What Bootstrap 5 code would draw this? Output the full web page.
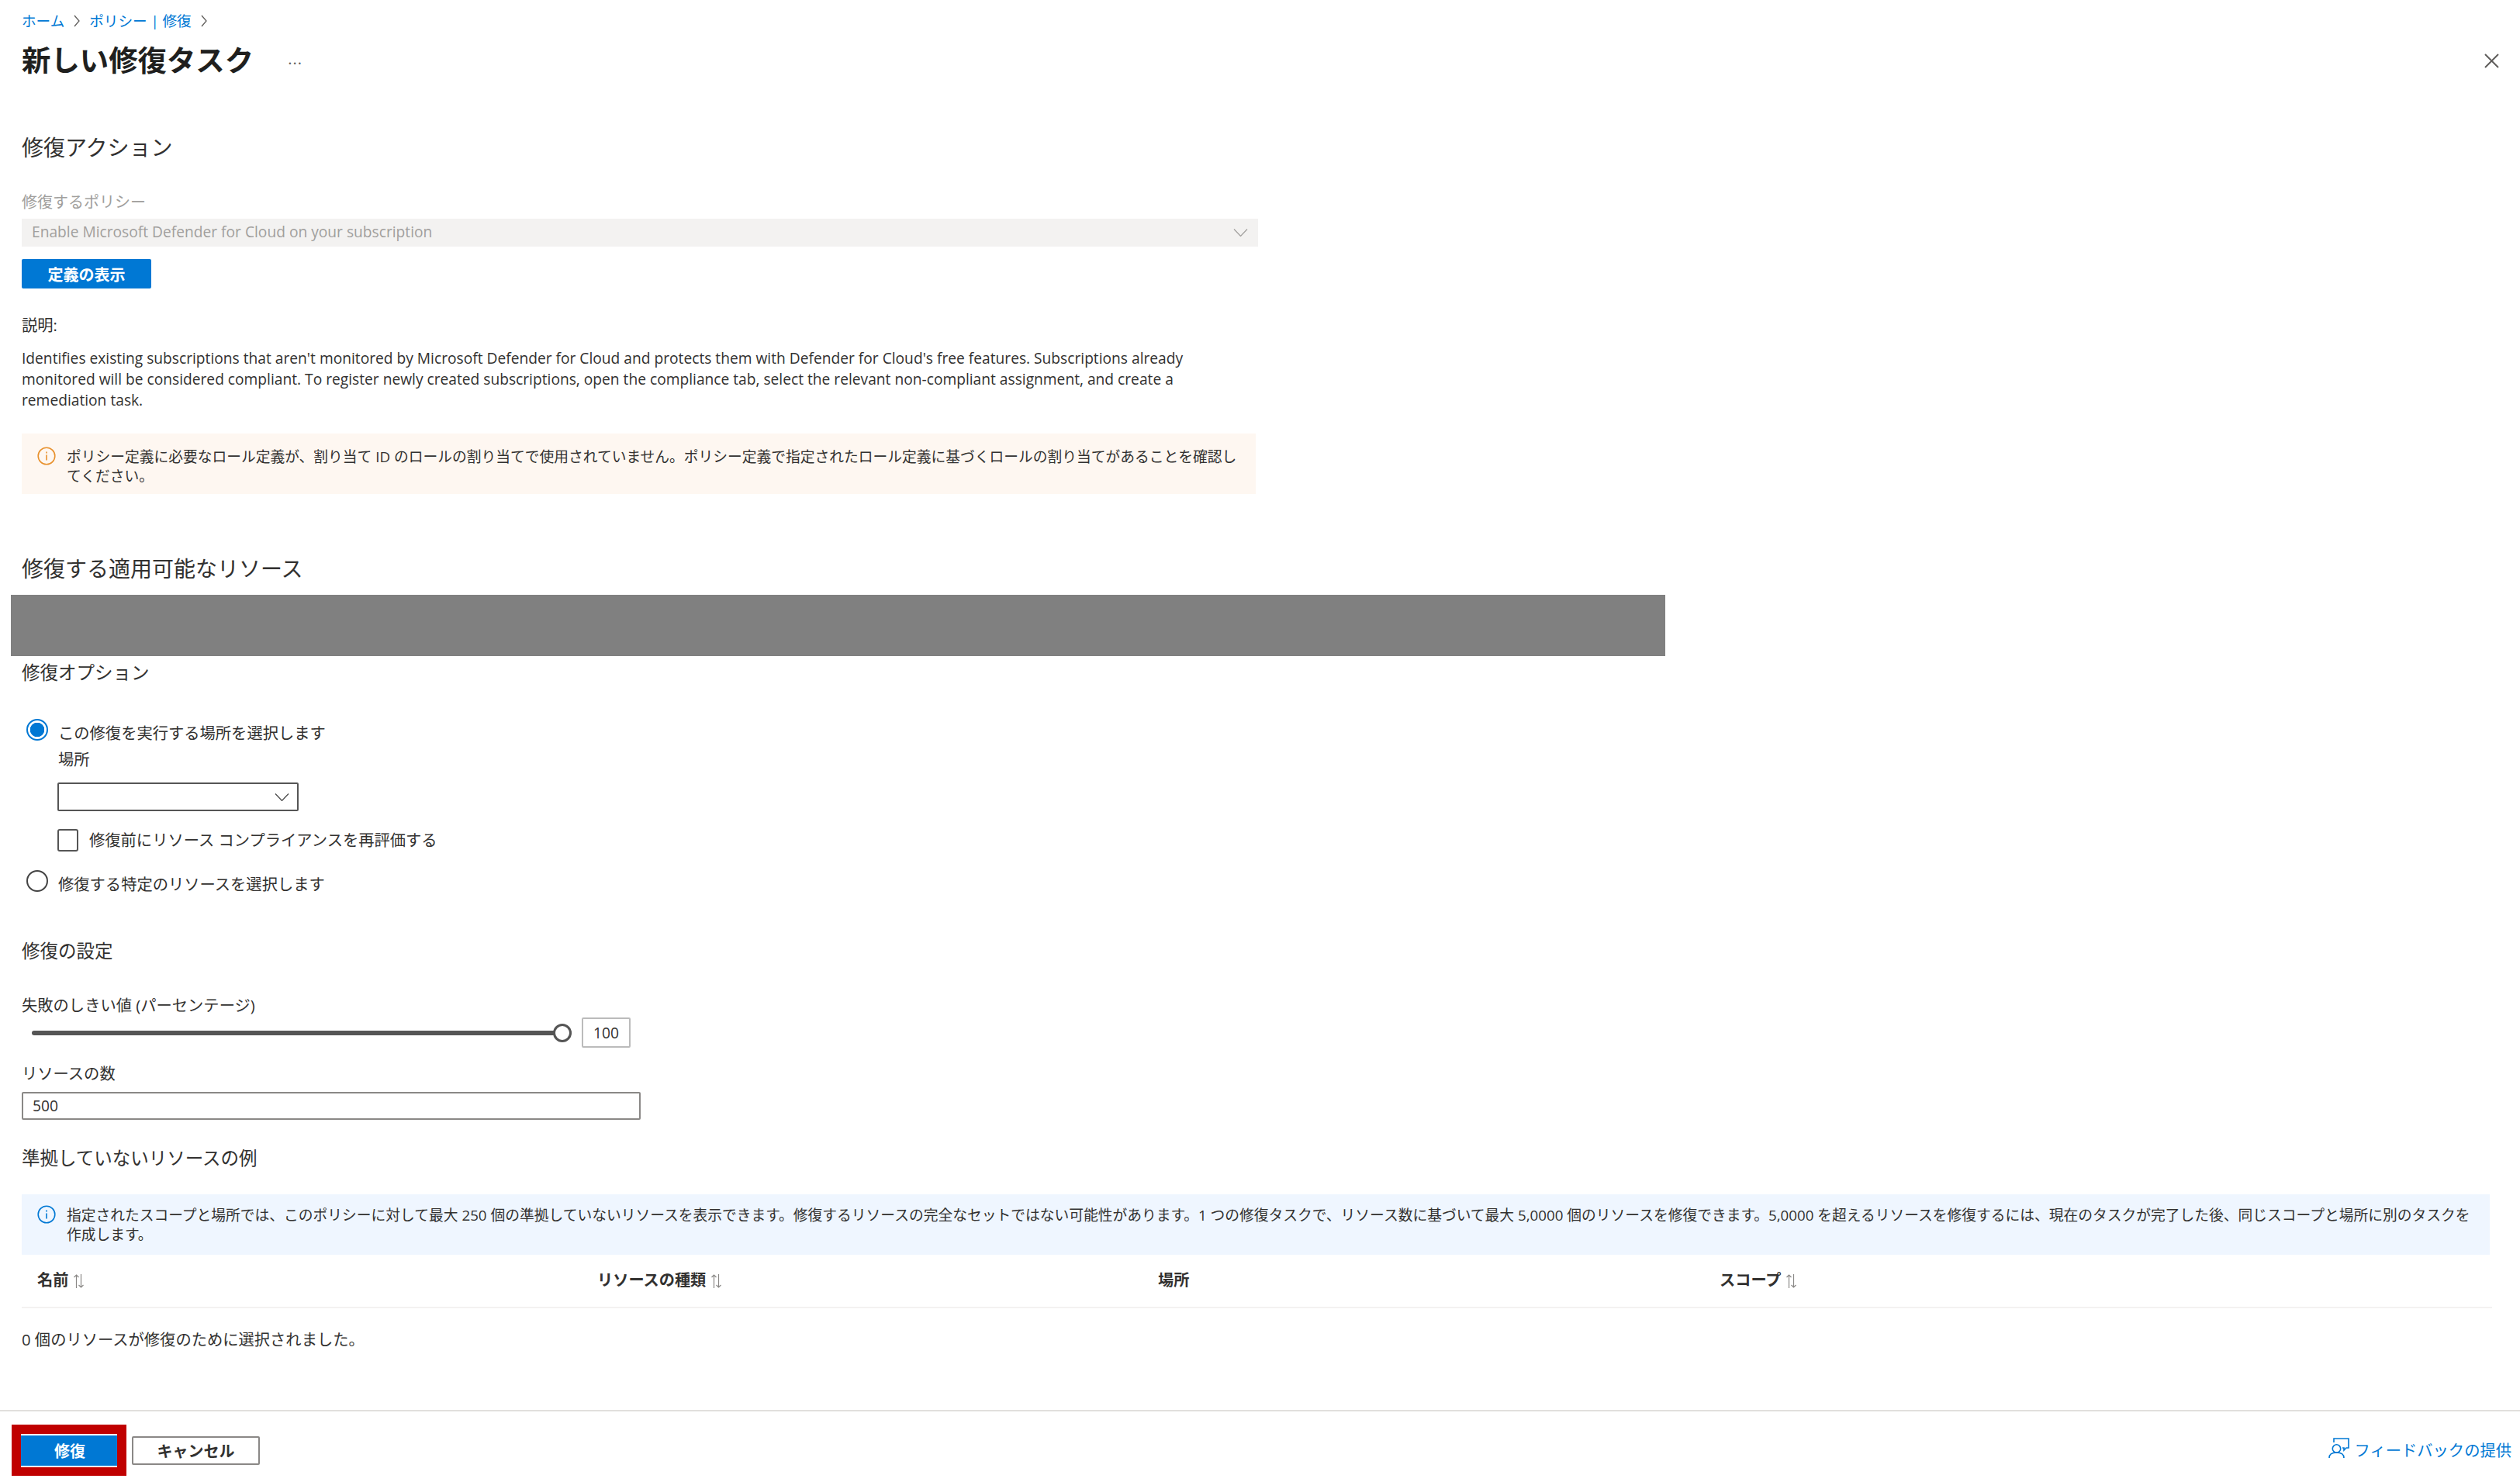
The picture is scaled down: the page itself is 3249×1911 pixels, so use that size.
<!DOCTYPE html>
<html lang="ja">
<head>
    <meta charset="UTF-8">
    <meta name="viewport" content="width=device-width, initial-scale=1.0">
    <title>新しい修復タスク</title>
    <link href="https://cdn.jsdelivr.net/npm/bootstrap@5.3.3/dist/css/bootstrap.min.css" rel="stylesheet">
    <style>
        html, body { height: 100%; }
        body {
            font-family: "Open Sans", "Noto Sans CJK JP", sans-serif;
            font-size: 20.3px;
            line-height: 28px;
            color: #323130;
            background: #fff;
        }
        .blade { height: 1911px; overflow: hidden; }
        .blade-scroll { padding-left: 28px; }

        .crumbs { --bs-breadcrumb-divider: ''; --bs-breadcrumb-item-padding-x: 0; margin: 0; padding-top: 14px; line-height: 26px; font-size: 18.6px; gap: 12px; }
        .crumbs a { color: #0078d4; text-decoration: none; }
        .crumbs .breadcrumb-item + .breadcrumb-item::before { display: none; }
        .crumbs svg { width: 8px; height: 16px; }
        .title-row { margin-top: 13px; height: 50px; padding-right: 27px; }
        .blade-title { font-size: 37.4px; line-height: 50px; font-weight: 700; margin: 0; color: #201f1e; }
        .more-dots { margin: 0 0 4px 44px; font-size: 20px; line-height: 20px; color: #605e5c; letter-spacing: 1px; }

        .sect-lg { font-size: 28px; line-height: 40px; font-weight: 400; margin: 0; }
        .sect-md { font-size: 23.5px; line-height: 32px; font-weight: 400; margin: 0; }

        .muted-label { color: #a19f9d; margin: 37px 0 7px; font-size: 20px; }
        .policy-select {
            width: 1594px; height: 36px; padding: 0 13px 2px; border: 0; border-radius: 0;
            background: #f3f2f1; color: #a19f9d; font-size: 19.2px; line-height: 34px;
        }
        .policy-select svg { width: 19px; height: 10px; margin: 2px 0 0; }
        .view-btn {
            width: 167px; height: 38px; margin-top: 16px; padding: 3px 0 0; border: 0; border-radius: 2px;
            background: #0078d4; font-size: 20px; font-weight: 700; line-height: 35px;
        }
        .desc-label { margin: 34px 0 15px; line-height: 27px; }
        .desc-text { width: 1560px; margin: 0; line-height: 27px; font-size: 19.2px; }

        .notice {
            margin: 0; border: 0; border-radius: 0; color: #323130; line-height: 25px; font-size: 18.75px;
            padding: 16px 20px 0; gap: 14px;
        }
        .notice svg { width: 24px; height: 24px; flex: none; margin-top: 0; }
        .notice-warn { width: 1591px; height: 78px; margin-top: 30px; padding-top: 17px; background: #fef7f1; }
        .notice-info { width: 3182px; height: 78px; margin-top: 31px; padding: 14px 24px 0 20px; background: #eff6ff; }

        .masked-block { width: 2133px; height: 79px; margin: 14px 0 0 -14px; background: #808080; }

        .choice { margin: 0; padding-left: 47px; min-height: 28px; }
        .choice .form-check-input {
            width: 28px; height: 28px; margin: -4px 0 0 -41px; background-color: #fff;
            border: 2px solid #444; box-shadow: none;
        }
        .choice .form-check-input:checked {
            border-color: #0078d4; background-color: #fff;
            background-image: radial-gradient(circle, #0078d4 0 9px, transparent 9.5px);
        }
        .choice-a { margin-top: 48px; }
        .choice-b { margin-top: 28px; }
        .place-label { margin-top: 6px; }
        .place-select { width: 311px; height: 37px; margin: 16px 0 0 -1px; padding: 0 10px; border: 2px solid #555; border-radius: 2px; }
        .place-select svg { width: 19px; height: 10px; }
        .recheck { margin: 23px 0 0 -1px; gap: 14px; height: 29px; }
        .recheck .form-check-input { width: 27px; height: 29px; margin: 0; border: 2px solid #555; border-radius: 3px; box-shadow: none; }
        .recheck .form-check-label { padding-bottom: 2px; }

        .threshold-row { height: 39px; margin: 2px 0 0 13px; gap: 13px; }
        .thresh-range { width: 696px; height: 24px; }
        .thresh-range::-webkit-slider-runnable-track { height: 6px; background: #555; border-radius: 3px; }
        .thresh-range::-webkit-slider-thumb {
            width: 24px; height: 24px; margin-top: -9px; background: #fff;
            border: 3px solid #555; border-radius: 50%; box-shadow: none;
        }
        .thresh-box { width: 63px; height: 39px; border: 2px solid #bbb; border-radius: 2px; text-align: center; line-height: 35px; font-size: 19.2px; }
        .count-input { width: 798px; height: 36px; margin-top: 10px; padding: 0 12px 2px; border: 2px solid #8a8886; border-radius: 2px; font-size: 19.2px; line-height: 30px; color: #323130; }

        .fail-table { width: 3185px; table-layout: fixed; margin: 0; --bs-table-border-color: #f3f2f1; }
        .fail-table th { height: 68px; padding: 0 0 4px 20px; border-bottom-width: 2px; font-weight: 700; font-size: 20.2px; line-height: 28px; vertical-align: middle; color: #323130; }
        .fail-table svg { width: 15px; height: 20px; vertical-align: -4px; }
        .col-a { width: 722px; } .col-b { width: 723px; } .col-c { width: 724px; }
        .sel-count { margin-top: 26px; }

        .blade-foot { height: 93px; border-top: 2px solid #e1dfdd; padding: 17px 11px 0 15px; }
        .red-frame { background: #c00000; padding: 12px 12px 11px; }
        .apply-btn {
            display: block; width: 124px; height: 43px; padding: 2px 0 0 2px; border: 0; border-top: 2px solid #fff; border-bottom: 2px solid #fff;
            border-radius: 0; background: #0078d4; color: #fff; font-size: 20px; font-weight: 700; line-height: 36px;
        }
        .cancel-btn {
            width: 165px; height: 37px; margin: 15px 0 0 7px; padding: 2px 0 0; border: 2px solid #8a8886; border-radius: 2px;
            background: #fff; color: #323130; font-size: 20px; font-weight: 700; line-height: 30px;
        }
        .feedback-link { color: #0078d4; text-decoration: none; gap: 7px; height: 28px; margin-top: 19px; }
        .feedback-link svg { width: 27px; height: 27px; margin-top: -6px; }
    </style>
</head>
<body>
    <div class="blade d-flex flex-column">
        <div class="blade-scroll flex-grow-1">
            <nav aria-label="breadcrumb">
                <ol class="breadcrumb crumbs align-items-center">
                    <li class="breadcrumb-item"><a href="#">ホーム</a></li>
                    <li class="breadcrumb-item d-flex"><svg viewBox="0 0 8 16" fill="none" stroke="#605e5c" stroke-width="1.3"><path d="M1 1l6 7-6 7"/></svg></li>
                    <li class="breadcrumb-item"><a href="#">ポリシー | 修復</a></li>
                    <li class="breadcrumb-item d-flex"><svg viewBox="0 0 8 16" fill="none" stroke="#605e5c" stroke-width="1.3"><path d="M1 1l6 7-6 7"/></svg></li>
                </ol>
            </nav>
            <div class="title-row d-flex align-items-center">
                <h1 class="blade-title">新しい修復タスク</h1>
                <span class="more-dots">...</span>
                <svg class="ms-auto" width="19" height="19" viewBox="0 0 19 19" stroke="#605e5c" stroke-width="2"><path d="M1 1l17 17M18 1L1 18"/></svg>
            </div>

            <h2 class="sect-lg" style="margin-top:67px">修復アクション</h2>
            <div class="muted-label">修復するポリシー</div>
            <div class="policy-select d-flex justify-content-between align-items-center">
                <span>Enable Microsoft Defender for Cloud on your subscription</span>
                <svg viewBox="0 0 19 10" fill="none" stroke="#a19f9d" stroke-width="1.2"><path d="M1 0.5l8.5 9 8.5-9"/></svg>
            </div>
            <button type="button" class="btn btn-primary view-btn d-block">定義の表示</button>

            <div class="desc-label">説明:</div>
            <p class="desc-text">Identifies existing subscriptions that aren't monitored by Microsoft Defender for Cloud and protects them with Defender for Cloud's free features. Subscriptions already monitored will be considered compliant. To register newly created subscriptions, open the compliance tab, select the relevant non-compliant assignment, and create a remediation task.</p>

            <div class="alert notice notice-warn d-flex">
                <svg viewBox="0 0 24 24" fill="none" stroke="#e8912d" stroke-width="1.6"><circle cx="12" cy="12" r="10.8"/><path d="M12 10.5v7M12 6.5v2"/></svg>
                <div>ポリシー定義に必要なロール定義が、割り当て ID のロールの割り当てで使用されていません。ポリシー定義で指定されたロール定義に基づくロールの割り当てがあることを確認してください。</div>
            </div>

            <h2 class="sect-lg" style="margin-top:76px">修復する適用可能なリソース</h2>
            <div class="masked-block"></div>

            <h3 class="sect-md" style="margin-top:5px">修復オプション</h3>
            <div class="form-check choice choice-a">
                <input class="form-check-input" type="radio" name="target" id="target-a" checked>
                <label class="form-check-label" for="target-a">この修復を実行する場所を選択します</label>
                <div class="place-label">場所</div>
                <div class="place-select d-flex justify-content-end align-items-center">
                    <svg viewBox="0 0 19 10" fill="none" stroke="#444" stroke-width="1.2"><path d="M1 0.5l8.5 9 8.5-9"/></svg>
                </div>
                <div class="recheck d-flex align-items-center">
                    <input class="form-check-input" type="checkbox" id="recheck">
                    <label class="form-check-label" for="recheck">修復前にリソース コンプライアンスを再評価する</label>
                </div>
            </div>
            <div class="form-check choice choice-b">
                <input class="form-check-input" type="radio" name="target" id="target-b">
                <label class="form-check-label" for="target-b">修復する特定のリソースを選択します</label>
            </div>

            <h3 class="sect-md" style="margin-top:56px">修復の設定</h3>
            <div style="margin-top:40px">失敗のしきい値 (パーセンテージ)</div>
            <div class="threshold-row d-flex align-items-center">
                <input type="range" class="form-range thresh-range" min="0" max="100" value="100" aria-label="失敗のしきい値">
                <div class="thresh-box">100</div>
            </div>
            <div style="margin-top:19px">リソースの数</div>
            <input type="text" class="form-control count-input" value="500" aria-label="リソースの数">

            <h3 class="sect-md" style="margin-top:33px">準拠していないリソースの例</h3>
            <div class="alert notice notice-info d-flex">
                <svg viewBox="0 0 24 24" fill="none" stroke="#0078d4" stroke-width="1.6"><circle cx="12" cy="12" r="10.8"/><path d="M12 10.5v7M12 6.5v2"/></svg>
                <div>指定されたスコープと場所では、このポリシーに対して最大 250 個の準拠していないリソースを表示できます。修復するリソースの完全なセットではない可能性があります。1 つの修復タスクで、リソース数に基づいて最大 5,0000 個のリソースを修復できます。5,0000 を超えるリソースを修復するには、現在のタスクが完了した後、同じスコープと場所に別のタスクを作成します。</div>
            </div>

            <table class="table fail-table">
                <colgroup><col class="col-a"><col class="col-b"><col class="col-c"><col></colgroup>
                <thead>
                    <tr>
                        <th>名前 <svg viewBox="0 0 15 20" fill="none" stroke="#8a8886" stroke-width="1.2"><path d="M4.5 19V2M1.5 5l3-3 3 3M10.5 1v17M7.5 15l3 3 3-3"/></svg></th>
                        <th>リソースの種類 <svg viewBox="0 0 15 20" fill="none" stroke="#8a8886" stroke-width="1.2"><path d="M4.5 19V2M1.5 5l3-3 3 3M10.5 1v17M7.5 15l3 3 3-3"/></svg></th>
                        <th>場所</th>
                        <th>スコープ <svg viewBox="0 0 15 20" fill="none" stroke="#8a8886" stroke-width="1.2"><path d="M4.5 19V2M1.5 5l3-3 3 3M10.5 1v17M7.5 15l3 3 3-3"/></svg></th>
                    </tr>
                </thead>
            </table>
            <div class="sel-count">0 個のリソースが修復のために選択されました。</div>
        </div>

        <div class="blade-foot d-flex align-items-start">
            <div class="red-frame"><button type="button" class="btn apply-btn">修復</button></div>
            <button type="button" class="btn cancel-btn">キャンセル</button>
            <a href="#" class="feedback-link ms-auto d-flex align-items-center">
                <svg viewBox="0 0 27 27" fill="none" stroke="#0078d4" stroke-width="1.6"><path d="M7 6V1h19v12h-3l-3 3v-3h-2"/><circle cx="10.5" cy="14" r="5.2"/><path d="M1 26c0-5 4-7 9.5-7S20 21 20 26"/></svg>
                <span>フィードバックの提供</span>
            </a>
        </div>
    </div>
    <script src="https://cdn.jsdelivr.net/npm/bootstrap@5.3.3/dist/js/bootstrap.bundle.min.js"></script>
</body>
</html>
